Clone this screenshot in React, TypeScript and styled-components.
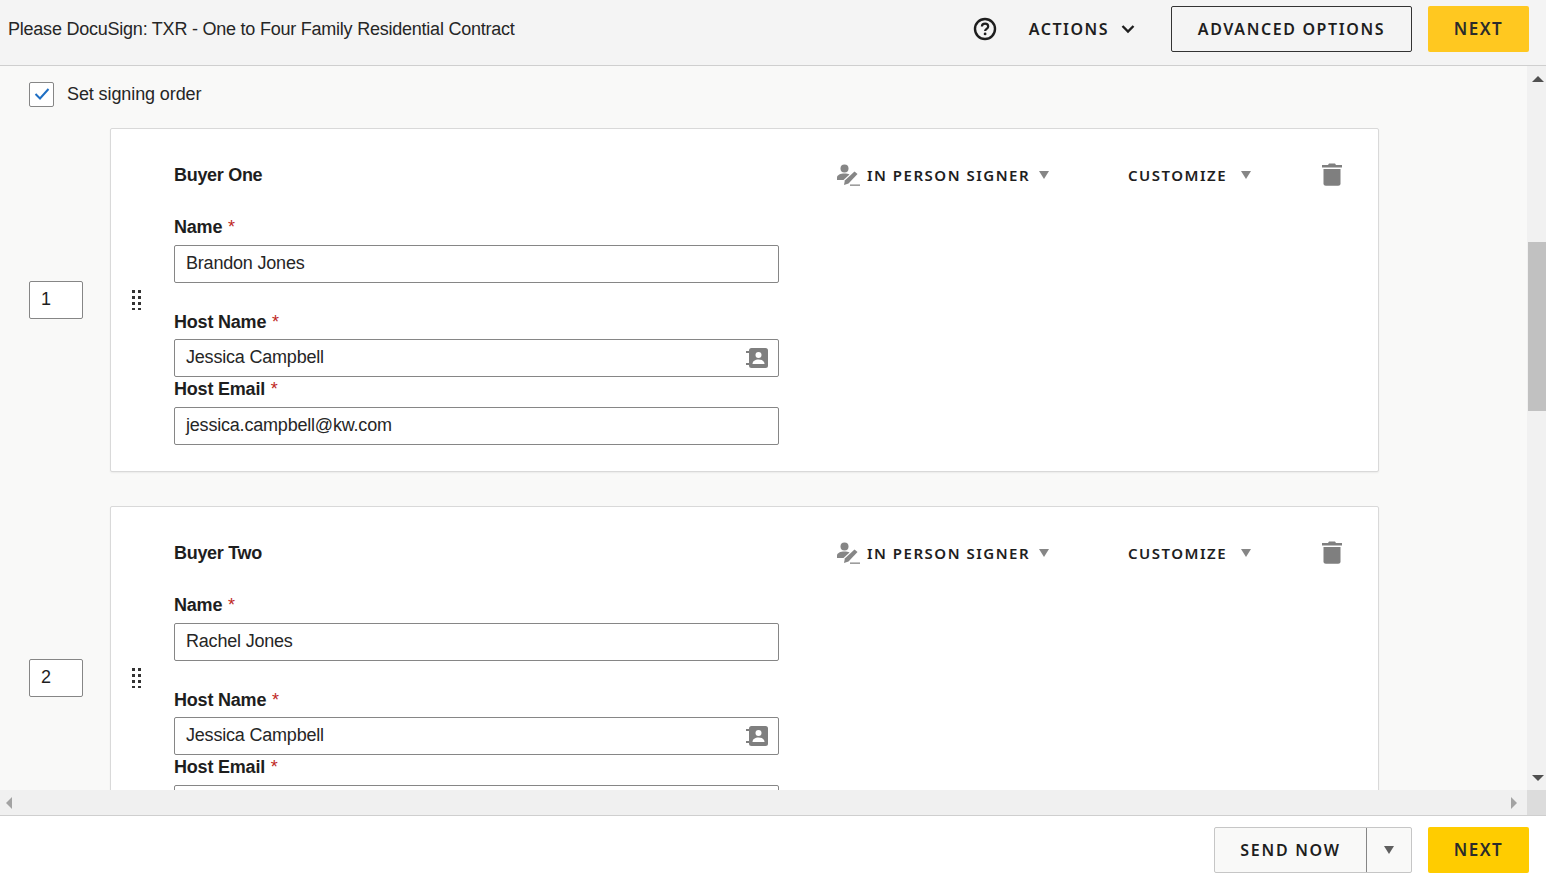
import styled, { createGlobalStyle } from "styled-components";

type TSigner = {
  order: number;
  title: string;
  name: string;
  hostName: string;
  hostEmail: string;
};

const signers: TSigner[] = [
  {
    order: 1,
    title: "Buyer One",
    name: "Brandon Jones",
    hostName: "Jessica Campbell",
    hostEmail: "jessica.campbell@kw.com",
  },
  {
    order: 2,
    title: "Buyer Two",
    name: "Rachel Jones",
    hostName: "Jessica Campbell",
    hostEmail: "",
  },
];

const HelpIcon = () => (
  <svg width="24" height="24" viewBox="0 0 24 24" fill="none">
    <circle cx="12" cy="12" r="10" stroke="#1e1e1e" strokeWidth="2.4" />
    <path
      d="M8.9 9.6c0-1.8 1.4-3 3.2-3s3.1 1.1 3.1 2.8c0 2.4-3.1 2.4-3.1 4.6"
      stroke="#1e1e1e"
      strokeWidth="2.2"
    />
    <circle cx="12.1" cy="16.9" r="1.4" fill="#1e1e1e" />
  </svg>
);

const ChevronIcon = () => (
  <svg width="14" height="10" viewBox="0 0 14 10" fill="none">
    <path d="M1.5 2l5.5 5.5L12.5 2" stroke="#1e1e1e" strokeWidth="2.4" />
  </svg>
);

const SignerIcon = () => (
  <svg width="24" height="24" viewBox="0 0 24 24" fill="#868686">
    <circle cx="8.5" cy="5.5" r="4" />
    <path d="M1 17v-2.5C1 12 4.5 10.500 8.500 10.500c2 0 3.700.3 5 1L7.500 17z" />
    <path d="M18.500 8.500l3 2.500-9 9.500-4.500 1.500.8-4.500z" />
    <rect x="14" y="21.500" width="10" height="1.300" />
  </svg>
);

const TrashIcon = () => (
  <svg width="20" height="23" viewBox="0 0 20 23" fill="#7f7f7f">
    <path d="M7 0.500h6l1 1.500h6v2.600H0V2h6z" />
    <path d="M1.500 6h17v14.500c0 1.300-1 2.300-2.300 2.300H3.800c-1.300 0-2.300-1-2.300-2.300z" />
  </svg>
);

const ContactsIcon = () => (
  <svg width="22" height="22" viewBox="0 0 22 22" fill="none">
    <rect x="3" y="1" width="19" height="20" rx="2.500" fill="#7f7f7f" />
    <rect x="0" y="4" width="3" height="2" fill="#7f7f7f" />
    <rect x="0" y="16" width="3" height="2" fill="#7f7f7f" />
    <circle cx="12.500" cy="8" r="3" fill="#fff" />
    <path d="M6.500 17c0-3 2.700-4.500 6-4.500s6 1.500 6 4.500z" fill="#fff" />
  </svg>
);

const GripIcon = () => (
  <svg width="10" height="20" viewBox="0 0 10 20" fill="#333">
    {[0, 6, 12, 18].map((y) => (
      <g key={y}>
        <rect x="0" y={y} width="3" height="3" />
        <rect x="6" y={y} width="3" height="3" />
      </g>
    ))}
  </svg>
);

const Field = ({
  label,
  value,
  contacts,
  labelGap = 9,
}: {
  label: string;
  value: string;
  contacts?: boolean;
  labelGap?: number;
}) => (
  <>
    <FieldLabel $gap={labelGap}>
      {label} <Required>*</Required>
    </FieldLabel>
    <InputBox>
      <InputValue>{value}</InputValue>
      {contacts && (
        <ContactsSlot>
          <ContactsIcon />
        </ContactsSlot>
      )}
    </InputBox>
  </>
);

const App = () => {
  return (
    <Page>
      <GlobalStyle />
      <TopBar>
        <DocTitle>Please DocuSign: TXR - One to Four Family Residential Contract</DocTitle>
        <TopActions>
          <HelpSlot>
            <HelpIcon />
          </HelpSlot>
          <ActionsMenu>
            ACTIONS
            <ChevronIcon />
          </ActionsMenu>
          <OutlineButton>ADVANCED OPTIONS</OutlineButton>
          <NextButton $tone="#ffc820">NEXT</NextButton>
        </TopActions>
      </TopBar>

      <Workspace>
        <ScrollRow>
          <Content>
            <OrderRow>
              <CheckBox>
                <svg width="16" height="14" viewBox="0 0 16 14" fill="none">
                  <path d="M1.500 7l4.500 4.500L14.500 2" stroke="#1f6fc4" strokeWidth="2" />
                </svg>
              </CheckBox>
              <OrderLabel>Set signing order</OrderLabel>
            </OrderRow>

            {signers.map((signer) => (
              <SignerRow key={signer.order}>
                <OrderBox>{signer.order}</OrderBox>
                <Card>
                  <GripColumn>
                    <GripIcon />
                  </GripColumn>
                  <CardBody>
                    <CardHeader>
                      <CardTitle>{signer.title}</CardTitle>
                      <SignerType>
                        <SignerIcon />
                        <MenuText $inset={7} $gap={9}>
                          IN PERSON SIGNER
                        </MenuText>
                        <Caret />
                      </SignerType>
                      <Customize>
                        <MenuText $inset={0} $gap={14}>
                          CUSTOMIZE
                        </MenuText>
                        <Caret />
                      </Customize>
                      <TrashSlot>
                        <TrashIcon />
                      </TrashSlot>
                    </CardHeader>
                    <Field label="Name" value={signer.name} />
                    <HostNameGroup>
                      <Field
                        label="Host Name"
                        value={signer.hostName}
                        labelGap={8}
                        contacts
                      />
                    </HostNameGroup>
                    <HostEmailGroup>
                      <Field label="Host Email" value={signer.hostEmail} />
                    </HostEmailGroup>
                  </CardBody>
                </Card>
              </SignerRow>
            ))}
          </Content>
          <VerticalBar>
            <ArrowUp />
            <VerticalThumb />
            <ArrowDown />
          </VerticalBar>
        </ScrollRow>
        <HorizontalBar>
          <HorizontalTrack>
            <ArrowLeft />
            <ArrowRight />
          </HorizontalTrack>
          <BarCorner />
        </HorizontalBar>
      </Workspace>

      <Footer>
        <SplitButton>
          <SplitMain>SEND NOW</SplitMain>
          <SplitCaret>
            <FooterCaret />
          </SplitCaret>
        </SplitButton>
        <NextButton $tone="#ffcc00">NEXT</NextButton>
      </Footer>
    </Page>
  );
};

const GlobalStyle = createGlobalStyle`
  html, body {
    margin: 0;
    padding: 0;
    height: 100%;
    overflow: hidden;
  }
  body {
    font-family: "Liberation Sans", Arial, sans-serif;
    color: #1e1e1e;
  }
  * {
    box-sizing: border-box;
  }
`;

const capsFont = `"Noto Sans", "Open Sans", sans-serif`;

const Page = styled.div`
  width: 1546px;
  height: 882px;
  display: flex;
  flex-direction: column;
  background: #fff;
`;

const TopBar = styled.header`
  height: 66px;
  flex: none;
  display: flex;
  align-items: center;
  justify-content: space-between;
  padding: 0 17px 7px 8px;
  background: #f4f4f4;
  border-bottom: 1px solid #cfcfcf;
`;

const DocTitle = styled.div`
  font-size: 18px;
  letter-spacing: -0.23px;
  color: #262626;
`;

const TopActions = styled.div`
  display: flex;
  align-items: center;
`;

const HelpSlot = styled.span`
  display: flex;
  margin-right: 32px;
`;

const ActionsMenu = styled.div`
  display: flex;
  align-items: center;
  gap: 12px;
  margin-right: 36px;
  font-family: ${capsFont};
  font-size: 16px;
  font-weight: 600;
  letter-spacing: 1.5px;
`;

const OutlineButton = styled.button`
  width: 241px;
  height: 46px;
  margin-right: 16px;
  padding: 0;
  background: transparent;
  border: 1px solid #333;
  border-radius: 2px;
  color: #1e1e1e;
  font-family: ${capsFont};
  font-size: 16px;
  font-weight: 600;
  letter-spacing: 1.6px;
`;

const NextButton = styled.button<{ $tone: string }>`
  width: 101px;
  height: 46px;
  padding: 0 0 1px;
  background: ${(p) => p.$tone};
  border: none;
  border-radius: 2px;
  color: #2b2b2b;
  font-family: ${capsFont};
  font-size: 17px;
  font-weight: 600;
  letter-spacing: 1.5px;
`;

const Workspace = styled.div`
  flex: none;
  height: 750px;
  display: flex;
  flex-direction: column;
  border-bottom: 1px solid #cfcfcf;
`;

const ScrollRow = styled.div`
  flex: 1;
  min-height: 0;
  display: flex;
`;

const Content = styled.main`
  flex: 1;
  min-width: 0;
  overflow: hidden;
  background: #f9f9f8;
`;

const OrderRow = styled.div`
  display: flex;
  align-items: center;
  height: 62px;
  padding: 0 0 6px 29px;
`;

const CheckBox = styled.span`
  width: 25px;
  height: 25px;
  margin-right: 13px;
  display: flex;
  align-items: center;
  justify-content: center;
  background: #fff;
  border: 1px solid #868686;
  border-radius: 2px;
`;

const OrderLabel = styled.span`
  font-size: 18px;
  letter-spacing: -0.1px;
  color: #262626;
`;

const SignerRow = styled.section`
  display: flex;
  align-items: center;
  padding-left: 29px;
  margin-bottom: 34px;
`;

const OrderBox = styled.div`
  width: 54px;
  height: 38px;
  flex: none;
  margin-right: 27px;
  padding: 0 0 2px 11px;
  display: flex;
  align-items: center;
  background: #fff;
  border: 1px solid #868686;
  border-radius: 2px;
  font-size: 18px;
`;

const Card = styled.article`
  width: 1269px;
  height: 344px;
  flex: none;
  display: flex;
  align-items: center;
  background: #fff;
  border: 1px solid #d9d9d9;
  border-radius: 2px;
  box-shadow: 0 1px 2px rgba(0, 0, 0, 0.06);
`;

const GripColumn = styled.div`
  width: 63px;
  flex: none;
  display: flex;
  padding-left: 21px;
`;

const CardBody = styled.div`
  flex: 1;
  min-width: 0;
  padding-top: 4px;
`;

const CardHeader = styled.div`
  height: 32px;
  margin-bottom: 26px;
  display: flex;
  align-items: center;
`;

const CardTitle = styled.div`
  width: 662px;
  font-size: 18px;
  font-weight: 700;
  letter-spacing: -0.3px;
`;

const SignerType = styled.div`
  width: 292px;
  margin-bottom: 2px;
  display: flex;
  align-items: center;
`;

const Customize = styled.div`
  width: 194px;
  margin-bottom: 2px;
  display: flex;
  align-items: center;
`;

const MenuText = styled.span<{ $inset: number; $gap: number }>`
  margin: 0 ${(p) => p.$gap}px 0 ${(p) => p.$inset}px;
  font-family: ${capsFont};
  font-size: 15px;
  font-weight: 600;
  letter-spacing: 1.5px;
`;

const Caret = styled.span`
  width: 0;
  height: 0;
  border-left: 5.500px solid transparent;
  border-right: 5.500px solid transparent;
  border-top: 8px solid #868686;
`;

const TrashSlot = styled.span`
  display: flex;
  margin-top: -3px;
`;

const FieldLabel = styled.div<{ $gap: number }>`
  height: 18px;
  margin-bottom: ${(p) => p.$gap}px;
  font-size: 18px;
  line-height: 18px;
  font-weight: 700;
  letter-spacing: -0.2px;
`;

const Required = styled.span`
  margin-left: 1px;
  font-weight: 400;
  color: #c0281e;
`;

const InputBox = styled.div`
  position: relative;
  width: 605px;
  height: 38px;
  display: flex;
  align-items: center;
  padding: 0 11px;
  background: #fff;
  border: 1px solid #868686;
  border-radius: 2px;
`;

const InputValue = styled.span`
  font-size: 18px;
  letter-spacing: -0.2px;
  color: #262626;
`;

const ContactsSlot = styled.span`
  position: absolute;
  right: 10px;
  top: 7px;
  display: flex;
`;

const HostNameGroup = styled.div`
  margin-top: 30px;
`;

const HostEmailGroup = styled.div`
  margin-top: 3px;
`;

const VerticalBar = styled.aside`
  width: 19px;
  flex: none;
  position: relative;
  background: #f1f1f1;
`;

const VerticalThumb = styled.div`
  margin: 176px 0 0 1px;
  height: 169px;
  background: #c1c1c1;
`;

const ArrowUp = styled.span`
  position: absolute;
  top: 10px;
  left: 5px;
  width: 0;
  height: 0;
  border-left: 6px solid transparent;
  border-right: 6px solid transparent;
  border-bottom: 6px solid #505050;
`;

const ArrowDown = styled.span`
  position: absolute;
  bottom: 9px;
  left: 5px;
  width: 0;
  height: 0;
  border-left: 6px solid transparent;
  border-right: 6px solid transparent;
  border-top: 6px solid #505050;
`;

const HorizontalBar = styled.div`
  height: 25px;
  flex: none;
  display: flex;
`;

const HorizontalTrack = styled.div`
  flex: 1;
  display: flex;
  align-items: center;
  justify-content: space-between;
  padding: 0 10px 0 6px;
  background: #f0f0f0;
`;

const ArrowLeft = styled.span`
  width: 0;
  height: 0;
  border-top: 6px solid transparent;
  border-bottom: 6px solid transparent;
  border-right: 6px solid #a3a3a3;
`;

const ArrowRight = styled.span`
  width: 0;
  height: 0;
  border-top: 6px solid transparent;
  border-bottom: 6px solid transparent;
  border-left: 6px solid #a3a3a3;
`;

const BarCorner = styled.div`
  width: 19px;
  background: #dcdcdc;
`;

const Footer = styled.footer`
  flex: 1;
  display: flex;
  align-items: flex-start;
  justify-content: flex-end;
  gap: 16px;
  padding: 11px 17px 0 0;
  background: #fff;
`;

const SplitButton = styled.div`
  width: 198px;
  height: 46px;
  display: flex;
  background: #f9f9f8;
  border: 1px solid #c6c6c6;
  border-radius: 2px;
`;

const SplitMain = styled.div`
  flex: 1;
  display: flex;
  align-items: center;
  justify-content: center;
  border-right: 1px solid #868686;
  font-family: ${capsFont};
  font-size: 16px;
  font-weight: 600;
  letter-spacing: 1.7px;
`;

const SplitCaret = styled.div`
  width: 44px;
  display: flex;
  align-items: center;
  justify-content: center;
`;

const FooterCaret = styled.span`
  width: 0;
  height: 0;
  border-left: 5.500px solid transparent;
  border-right: 5.500px solid transparent;
  border-top: 8px solid #5f5f5f;
`;

export default App;
